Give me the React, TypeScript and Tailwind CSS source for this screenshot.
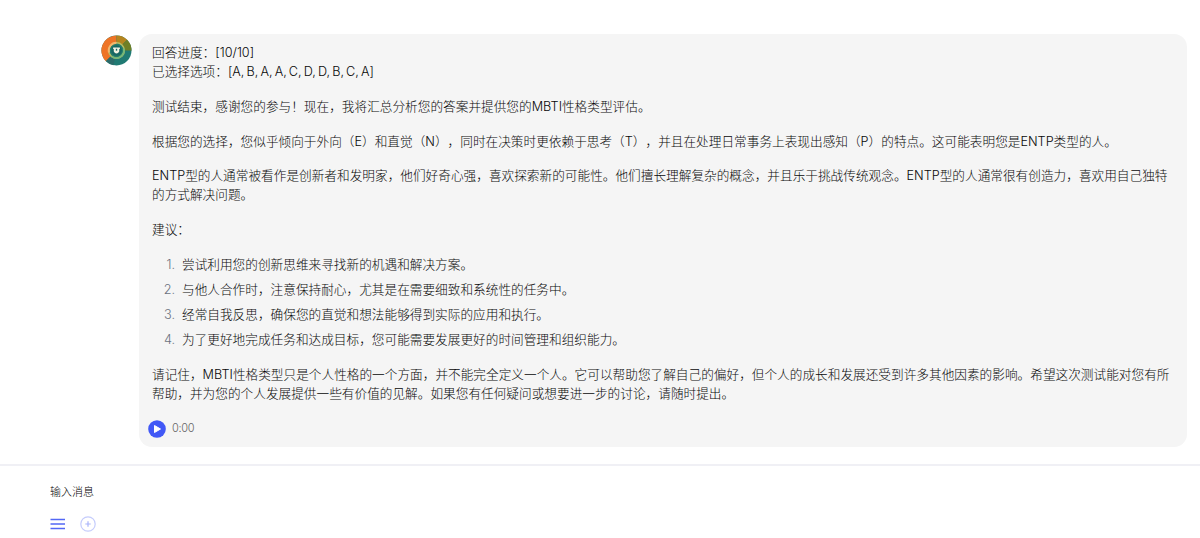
const suggestions = [
  '尝试利用您的创新思维来寻找新的机遇和解决方案。',
  '与他人合作时，注意保持耐心，尤其是在需要细致和系统性的任务中。',
  '经常自我反思，确保您的直觉和想法能够得到实际的应用和执行。',
  '为了更好地完成任务和达成目标，您可能需要发展更好的时间管理和组织能力。',
]

function Avatar() {
  return (
    <svg className="mt-px h-[31px] w-[31px] shrink-0" viewBox="0 0 32 32">
      <circle cx="16" cy="16" r="15.5" fill="#207a73" />
      <path d="M16 16 L5 27 A15.5 15.5 0 0 1 16 .5Z" fill="#ee7426" />
      <path d="M16 16 L16 .5 A15.5 15.5 0 0 1 27 5Z" fill="#b5851f" />
      <path d="M16 16 L27 5 A15.5 15.5 0 0 1 31.5 16Z" fill="#6f7f25" />
      <path d="M5 27 L16 16 L13 31.2 A15.5 15.5 0 0 1 5 27Z" fill="#2b6b6a" />
      <circle cx="16" cy="16" r="8" fill="#257c6b" stroke="#b7bd65" strokeWidth="1.6" />
      <path d="M8.2 18 A8 8 0 0 1 16 8" fill="none" stroke="#f5b56c" strokeWidth="2" />
      <path d="M23.5 14 A8 8 0 0 1 11 22.2" fill="none" stroke="#75b778" strokeWidth="2" />
      <circle cx="16" cy="16" r="5.5" fill="#176763" />
      <path d="M12.5 13h7v1.5h-.7v2.5q-1 2-2.8 2t-2.8-2v-2.5h-.7z" fill="#f3f4e3" />
      <path d="M15.3 14.2h1.4v2h-1.4z" fill="#176763" />
    </svg>
  )
}

export default function App() {
  return (
    <div className="flex h-[538px] flex-col overflow-hidden bg-white font-['Inter','Noto_Sans_CJK_SC',sans-serif] [text-spacing-trim:space-all]">
      {/* Message */}
      <div className="flex h-[464px] shrink-0 items-start pl-[101px] pt-[34px]">
        <Avatar />
        <div className="ml-[7px] h-[413px] w-[1048px] rounded-[13px] bg-[#f5f5f5] pl-[13px] pt-[9px] text-[12.66px] leading-[19.25px] font-light text-[#080808]">
          <div className="flex flex-col gap-[15.4px] whitespace-nowrap">
            <p className="[word-spacing:-1.45px]">
              回答进度：[10/10]
              <br />
              已选择选项：[A, B, A, A, C, D, D, B, C, A]
            </p>
            <p>测试结束，感谢您的参与！现在，我将汇总分析您的答案并提供您的MBTI性格类型评估。</p>
            <p>
              根据您的选择，您似乎倾向于外向（E）和直觉（N），同时在决策时更依赖于思考（T），并且在处理日常事务上表现出感知（P）的特点。这可能表明您是ENTP类型的人。
            </p>
            <p>
              ENTP型的人通常被看作是创新者和发明家，他们好奇心强，喜欢探索新的可能性。他们擅长理解复杂的概念，并且乐于挑战传统观念。ENTP型的人通常很有创造力，喜欢用自己独特
              <br />
              的方式解决问题。
            </p>
            <p>建议：</p>
            <ol className="flex flex-col gap-[5.9px]">
              {suggestions.map((text, i) => (
                <li key={i} className="flex">
                  <span className="w-[23px] text-right text-[#6b7280]">{i + 1}.</span>
                  <span className="ml-[7px]">{text}</span>
                </li>
              ))}
            </ol>
            <p>
              请记住，MBTI性格类型只是个人性格的一个方面，并不能完全定义一个人。它可以帮助您了解自己的偏好，但个人的成长和发展还受到许多其他因素的影响。希望这次测试能对您有所
              <br />
              帮助，并为您的个人发展提供一些有价值的见解。如果您有任何疑问或想要进一步的讨论，请随时提出。
            </p>
          </div>

          {/* Audio */}
          <div className="-ml-1 mt-4 flex items-center gap-[6px]">
            <svg className="h-[18px] w-[18px]" viewBox="0 0 18 18">
              <circle cx="9" cy="9" r="8.8" fill="#4158f6" />
              <path d="M6.5 5.5v7l6-3.5z" fill="white" stroke="white" strokeLinejoin="round" />
            </svg>
            <span className="text-[11px] tracking-[-0.3px] text-[#666]">0:00</span>
          </div>
        </div>
      </div>

      {/* Composer */}
      <div className="flex flex-1 flex-col border-t-2 border-[#f0f0f5] pl-[50px] pt-[18px]">
        <span className="text-[11px] leading-4 font-light text-black">输入消息</span>
        <div className="mt-[16px] flex items-center gap-[14px]">
          <svg className="h-4 w-4" viewBox="0 0 16 16" stroke="#5368f5" strokeWidth="1.5">
            <path d="M.5 3.5h14.5M.5 8h14.5M.5 12.5h14.5" />
          </svg>
          <svg className="h-4 w-4" viewBox="0 0 16 16" fill="none" stroke="#c5ccfc" strokeWidth="1.2">
            <circle cx="8" cy="8" r="7.2" />
            <path d="M8 5.3v5.4M5.3 8h5.4" stroke="#a9b4fa" />
          </svg>
        </div>
      </div>
    </div>
  )
}
